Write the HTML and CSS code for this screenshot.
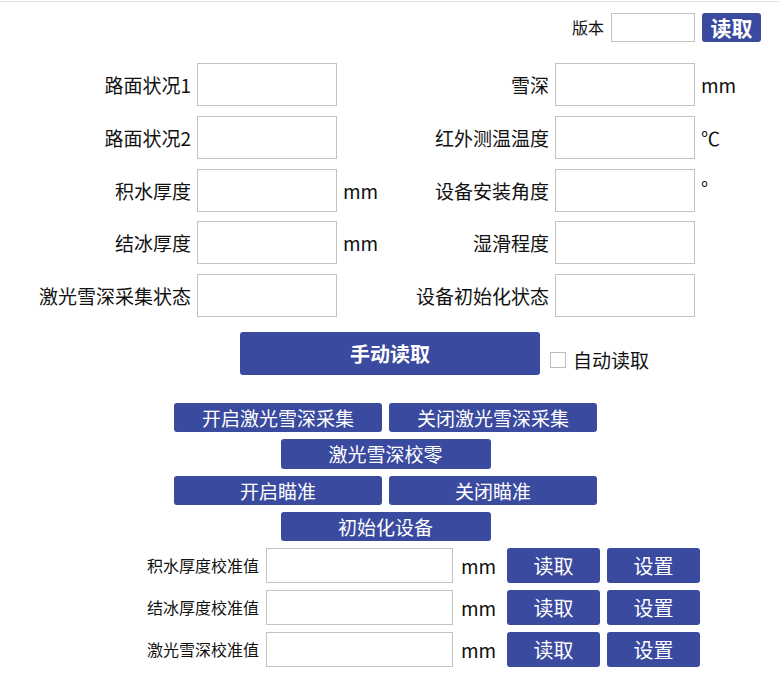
FILE: index.html
```html
<!DOCTYPE html>
<html>
<head>
<meta charset="utf-8">
<link rel="stylesheet" href="styles.css">
</head>
<body>
<div class="page">
  <div class="topbar">
    <span class="ver-label">版本</span>
    <input class="ver-input" type="text">
    <button class="btn ver-btn">读取</button>
  </div>

  <div class="form">
    <label class="lbl">路面状况1</label><input class="fld" type="text"><span class="unit"></span>
    <label class="lbl">雪深</label><input class="fld" type="text"><span class="unit">mm</span>

    <label class="lbl">路面状况2</label><input class="fld" type="text"><span class="unit"></span>
    <label class="lbl">红外测温温度</label><input class="fld" type="text"><span class="unit">℃</span>

    <label class="lbl">积水厚度</label><input class="fld" type="text"><span class="unit">mm</span>
    <label class="lbl">设备安装角度</label><input class="fld" type="text"><span class="unit deg">°</span>

    <label class="lbl">结冰厚度</label><input class="fld" type="text"><span class="unit">mm</span>
    <label class="lbl">湿滑程度</label><input class="fld" type="text"><span class="unit"></span>

    <label class="lbl">激光雪深采集状态</label><input class="fld" type="text"><span class="unit"></span>
    <label class="lbl">设备初始化状态</label><input class="fld" type="text"><span class="unit"></span>
  </div>

  <div class="manual-row">
    <button class="btn manual-btn">手动读取</button>
    <label class="auto"><span class="cbox"></span>自动读取</label>
  </div>

  <div class="actions">
    <div class="act-row">
      <button class="btn act">开启激光雪深采集</button>
      <button class="btn act">关闭激光雪深采集</button>
    </div>
    <div class="act-row">
      <button class="btn act">激光雪深校零</button>
    </div>
    <div class="act-row">
      <button class="btn act">开启瞄准</button>
      <button class="btn act">关闭瞄准</button>
    </div>
    <div class="act-row">
      <button class="btn act">初始化设备</button>
    </div>
  </div>

  <div class="calib">
    <label class="clbl">积水厚度校准值</label><input class="cfld" type="text"><span class="cunit">mm</span>
    <button class="btn cbtn">读取</button><button class="btn cbtn">设置</button>

    <label class="clbl">结冰厚度校准值</label><input class="cfld" type="text"><span class="cunit">mm</span>
    <button class="btn cbtn">读取</button><button class="btn cbtn">设置</button>

    <label class="clbl">激光雪深校准值</label><input class="cfld" type="text"><span class="cunit">mm</span>
    <button class="btn cbtn">读取</button><button class="btn cbtn">设置</button>
  </div>
</div>
</body>
</html>
```

FILE: styles.css
```css
* { box-sizing: border-box; }
html, body {
  margin: 0;
  padding: 0;
  background: #fff;
}
body {
  font-family: "Noto Sans CJK SC", "Noto Sans", sans-serif;
  color: #111;
}
.page {
  width: 779px;
  height: 683px;
  border-top: 1px solid #e2e2e2;
  margin-top: 1px;
  overflow: hidden;
}
.btn {
  background: #3a4a9f;
  color: #fff;
  border: none;
  border-radius: 3px;
  font-family: "Noto Sans CJK SC", "Noto Sans", sans-serif;
  padding: 0;
  cursor: pointer;
}
input {
  border: 1px solid #c3c3c3;
  background: #fff;
  margin: 0;
  padding: 0;
}

/* top bar */
.topbar {
  display: flex;
  justify-content: flex-end;
  align-items: center;
  gap: 7px;
  padding: 10px 18px 0 0;
  height: 40px;
}
.ver-label {
  font-size: 16px;
  line-height: 29px;
}
.ver-input {
  width: 84px;
  height: 29px;
}
.ver-btn {
  width: 59px;
  height: 29px;
  font-size: 21px;
  font-weight: bold;
  line-height: 29px;
}

/* main form */
.form {
  display: grid;
  grid-template-columns: 191px 140px 51px 149px 140px auto;
  grid-auto-rows: 43px;
  column-gap: 6px;
  row-gap: 9.75px;
  margin-top: 21px;
}
.lbl {
  text-align: right;
  font-size: 19px;
  line-height: 43px;
  white-space: nowrap;
}
.fld {
  width: 140px;
  height: 43px;
}
.unit {
  font-size: 19px;
  line-height: 43px;
  white-space: nowrap;
}
.unit.deg {
  line-height: 38px;
}

/* manual read */
.manual-row {
  display: flex;
  align-items: center;
  margin: 15px 0 0 240px;
  gap: 10px;
}
.manual-btn {
  width: 300px;
  height: 43px;
  font-size: 20px;
  font-weight: bold;
}
.auto {
  display: flex;
  align-items: center;
  gap: 7px;
  font-size: 19px;
  margin-top: 12px;
}
.cbox {
  width: 16px;
  height: 16px;
  border: 1px solid #bdbdbd;
  display: inline-block;
}

/* action buttons */
.actions {
  width: 423px;
  margin: 28px 0 0 174px;
  display: flex;
  flex-direction: column;
  gap: 7px;
}
.act-row {
  display: flex;
  justify-content: center;
  gap: 7px;
}
.act {
  width: 208px;
  height: 29.3px;
  font-size: 19px;
  line-height: 29px;
}
.act-row:nth-child(2) .act,
.act-row:nth-child(4) .act {
  width: 210px;
}

/* calibration */
.calib {
  display: grid;
  grid-template-columns: 259px 187px 40px 93px 93px;
  grid-auto-rows: 35px;
  column-gap: 7px;
  row-gap: 7px;
  margin-top: 7px;
}
.clbl {
  text-align: right;
  font-size: 16px;
  line-height: 35px;
  white-space: nowrap;
}
.cfld {
  width: 187px;
  height: 35px;
}
.cunit {
  font-size: 19px;
  line-height: 35px;
  padding-left: 1px;
}
.cbtn {
  width: 93px;
  height: 35px;
  font-size: 20px;
}
```
